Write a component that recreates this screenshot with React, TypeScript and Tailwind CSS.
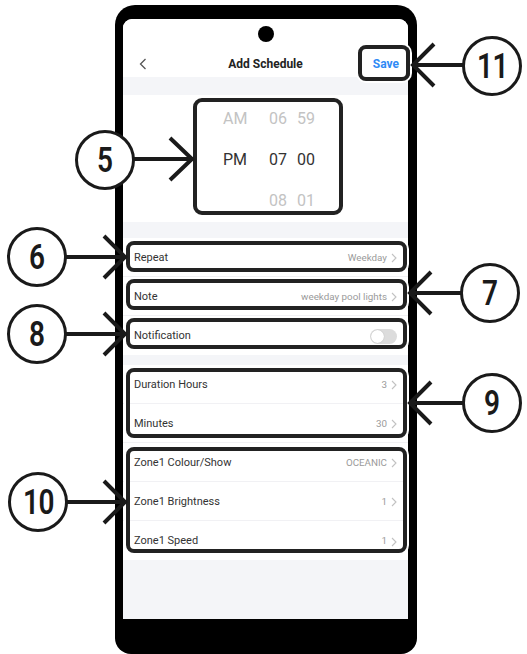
import React from "react";

type RowProps = {
  label: string;
  value?: string;
  toggle?: boolean;
  last?: boolean;
};

function Chevron() {
  return (
    <svg width="6" height="10" viewBox="0 0 6 10" className="ml-[4px] shrink-0" aria-hidden>
      <path d="M1 1l4 4-4 4" fill="none" stroke="#c2c2c2" strokeWidth="1.1" />
    </svg>
  );
}

function Row({ label, value, toggle, last }: RowProps) {
  return (
    <div
      className={`flex h-[39px] items-center justify-between bg-white pl-[11px] pr-[11px] pt-[2px] ${
        last ? "" : "border-b border-[#f1f1f4]"
      }`}
    >
      <span className="text-[11px] text-[#333]">{label}</span>
      {toggle ? (
        <span className="flex h-[15px] w-[27px] items-center rounded-full bg-[#dcdcdc] pl-[1px]">
          <span className="h-[13px] w-[13px] rounded-full bg-white shadow-[0_0_1px_rgba(0,0,0,0.25)]" />
        </span>
      ) : (
        <span className="flex items-center text-[9.8px] text-[#9a9a9a]">
          {value}
          <Chevron />
        </span>
      )}
    </div>
  );
}

function PickerRow({ ampm, h, m, active }: { ampm: string; h: string; m: string; active?: boolean }) {
  return (
    <div
      className={`flex h-[41px] items-center pl-[100px] pt-[2px] text-[16px] ${
        active ? "text-[#333]" : "text-[#c3c3c3]"
      }`}
    >
      <span className="w-[46px]">{ampm}</span>
      <span className="w-[28px]">{h}</span>
      <span>{m}</span>
    </div>
  );
}

function Callout({ n, pos }: { n: string; pos: string }) {
  return (
    <div
      className={`absolute ${pos} flex h-[60px] w-[60px] items-center justify-center rounded-full border-[3px] border-[#1a1a1a] bg-white text-[#1a1a1a]`}
    >
      <span className="inline-block scale-x-[0.8] font-['Roboto',sans-serif] text-[35px] font-semibold leading-none tracking-[-0.5px]">
        {n}
      </span>
    </div>
  );
}

export default function App() {
  return (
    <div className="relative h-[654px] w-[527px] overflow-hidden bg-white pl-[115px] pt-[5px] font-['Roboto','Liberation_Sans',sans-serif]">
      {/* phone */}
      <div className="h-[649px] w-[302px] rounded-t-[20px] rounded-b-[16px] bg-black pl-[8px] pr-[9px] pt-[14px]">
        <div className="flex h-[600px] flex-col overflow-hidden rounded-t-[9px] bg-[#f4f5f8]">
          <header className="flex h-[58px] shrink-0 flex-col bg-white">
            <span className="mx-auto mt-[7px] h-[16px] w-[16px] rounded-full bg-black" />
            <div className="mt-[11px] grid h-[22px] grid-cols-[1fr_auto_1fr] items-center">
              <span className="pl-[16px]">
                <svg width="8" height="12" viewBox="0 0 8 12" aria-hidden>
                  <path d="M6.5 1L1.5 6l5 5" fill="none" stroke="#555" strokeWidth="1.3" />
                </svg>
              </span>
              <h1 className="text-[12px] font-bold text-[#222]">Add Schedule</h1>
              <span className="pr-[9px] text-right text-[12px] font-bold text-[#2f8af5]">Save</span>
            </div>
          </header>

          <div className="mt-[18px] h-[127px] shrink-0 bg-white pt-[2px]">
            <PickerRow ampm="AM" h="06" m="59" />
            <PickerRow ampm="PM" h="07" m="00" active />
            <PickerRow ampm="" h="08" m="01" />
          </div>

          <div className="mt-[16px] shrink-0">
            <Row label="Repeat" value="Weekday" />
            <Row label="Note" value="weekday pool lights" />
            <Row label="Notification" toggle last />
          </div>

          <div className="mt-[10px] shrink-0">
            <Row label="Duration Hours" value="3" />
            <Row label="Minutes" value="30" />
            <Row label="Zone1 Colour/Show" value="OCEANIC" />
            <Row label="Zone1 Brightness" value="1" />
            <Row label="Zone1 Speed" value="1" last />
          </div>
        </div>
      </div>

      {/* annotation boxes */}
      <div className="absolute left-[358px] top-[45px] h-[36px] w-[52px] rounded-[8px] border-[4px] border-[#222] shadow-[0_0_0_2px_#fff]" />
      <div className="absolute left-[193px] top-[98px] h-[117px] w-[150px] rounded-[9px] border-[4px] border-[#222] shadow-[0_0_0_2px_#fff]" />
      <div className="absolute left-[126px] top-[241px] h-[31px] w-[281px] rounded-[8px] border-[4px] border-[#222] shadow-[0_0_0_2px_#fff]" />
      <div className="absolute left-[126px] top-[279px] h-[31px] w-[281px] rounded-[8px] border-[4px] border-[#222] shadow-[0_0_0_2px_#fff]" />
      <div className="absolute left-[126px] top-[318px] h-[31px] w-[281px] rounded-[8px] border-[4px] border-[#222] shadow-[0_0_0_2px_#fff]" />
      <div className="absolute left-[126px] top-[368px] h-[70px] w-[281px] rounded-[8px] border-[4px] border-[#222] shadow-[0_0_0_2px_#fff]" />
      <div className="absolute left-[126px] top-[447px] h-[106px] w-[281px] rounded-[8px] border-[4px] border-[#222] shadow-[0_0_0_2px_#fff]" />

      {/* arrows */}
      <svg className="pointer-events-none absolute left-0 top-0" width="527" height="654" aria-hidden>
        <g fill="none" stroke="#1a1a1a" strokeWidth="4" strokeLinejoin="miter">
          <path d="M413 65H463M434 44L413 65L434 86" />
          <path d="M134 159H192M170 138L192 159L170 180" />
          <path d="M66 257H125M104 236L125 257L104 278" />
          <path d="M66 334H125M104 313L125 334L104 355" />
          <path d="M67 502H125M104 481L125 502L104 523" />
          <path d="M410 293H461M431 272L410 293L431 314" />
          <path d="M410 403H463M431 382L410 403L431 424" />
        </g>
      </svg>

      {/* callouts */}
      <Callout n="11" pos="left-[462px] top-[36px]" />
      <Callout n="5" pos="left-[75px] top-[130px]" />
      <Callout n="6" pos="left-[7px] top-[227px]" />
      <Callout n="7" pos="left-[460px] top-[263px]" />
      <Callout n="8" pos="left-[7px] top-[304px]" />
      <Callout n="9" pos="left-[462px] top-[373px]" />
      <Callout n="10" pos="left-[8px] top-[472px]" />
    </div>
  );
}
